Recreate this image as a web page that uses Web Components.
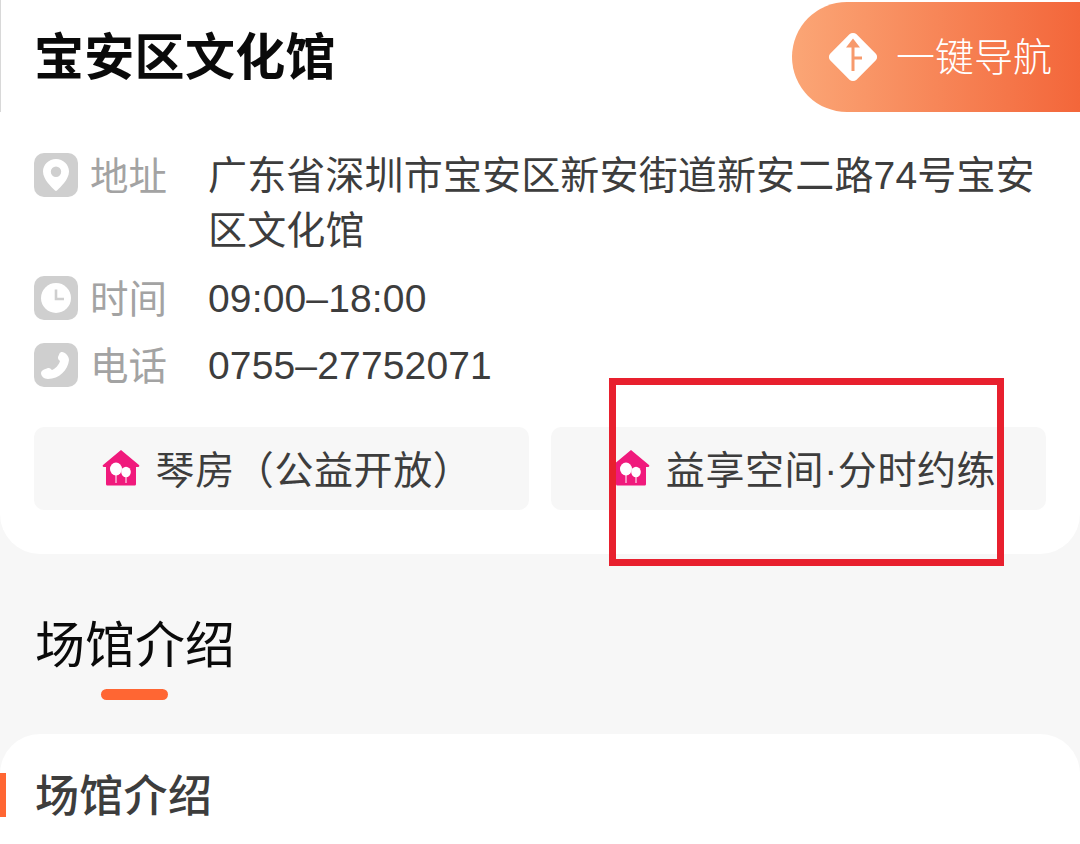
<!DOCTYPE html>
<html lang="zh-CN">
<head>
<meta charset="utf-8">
<title>宝安区文化馆</title>
<style>
  html, body { margin: 0; height: 100%; overflow: hidden; background: #f7f7f7; }
  body { font-family: "Noto Sans CJK SC", "Noto Sans", sans-serif; position: relative; }
</style>
</head>
<body>
<venue-card>
  <venue-header slot="head" name="宝安区文化馆"></venue-header>
  <info-row icon="pin" label="地址">广东省深圳市宝安区新安街道新安二路74号宝安区文化馆</info-row>
  <info-row icon="clock" label="时间">09:00–18:00</info-row>
  <info-row icon="phone" label="电话">0755–27752071</info-row>
  <chip-row slot="chips">
    <facility-chip>琴房（公益开放）</facility-chip>
    <facility-chip>益享空间·分时约练</facility-chip>
  </chip-row>
</venue-card>
<section-title>场馆介绍</section-title>
<intro-card>场馆介绍</intro-card>
<mark-box></mark-box>

<script>
  const ICONS = {
    pin: '<path fill="#fff" fill-rule="evenodd" d="M22 6c-7.200 0-13 5.600-13 12.600 0 8 8.600 15.600 12 19 .6.500 1.400.500 2 0 3.400-3.400 12-11 12-19C35 11.600 29.200 6 22 6zm0 7.600a5.200 5.200 0 1 1 0 10.400 5.200 5.200 0 0 1 0-10.400z"/>',
    clock: '<circle cx="22" cy="22" r="15" fill="#fff"/><path d="M22 13.500V23h8" fill="none" stroke="#cfcfcf" stroke-width="2.600"/>',
    phone: '<path fill="#fff" d="M28 9C31 9 35 13 35 17C34 27 25 36 14 36C10 36 7 33 7 30C7 28 9 27 10 26.500L14 25C16 24.500 17 26 18 27C21 26 25 22 26 18C25 17 23.600 16 24 14L25.500 10.500C26 9.500 27 9 28 9z"/>'
  };
  const LATIN_CJK = '"Liberation Sans", "Noto Sans CJK SC", sans-serif';

  class VenueCard extends HTMLElement {
    constructor() {
      super();
      this.attachShadow({ mode: 'open' }).innerHTML = `
        <style>
          :host { display: block; background: #fff; height: 554px; border-radius: 0 0 40px 40px; overflow: hidden; }
          .rows { display: flex; flex-direction: column; padding: 34px 34px 0 34px; }
        </style>
        <slot name="head"></slot>
        <div class="rows"><slot></slot></div>
        <slot name="chips"></slot>`;
    }
  }

  class VenueHeader extends HTMLElement {
    constructor() {
      super();
      this.attachShadow({ mode: 'open' }).innerHTML = `
        <style>
          :host { display: flex; justify-content: space-between; height: 112px; padding-top: 2px; box-sizing: border-box;
                  border-left: 1px solid #d8d8d8; }
          h1 { margin: 0; padding-left: 33px; font-size: 50px; letter-spacing: .3px; font-weight: 700; line-height: 102px; color: #0a0a0a; }
          .nav { display: flex; align-items: center; gap: 15px; width: 288px; box-sizing: border-box; padding: 0 0 0 33px;
                 border-radius: 55px 0 0 55px; color: #fff; font-size: 39px; font-weight: 300;
                 background: linear-gradient(90deg, #fba676, #f3663a); }
          .nav span { padding-bottom: 6px; }
          svg { width: 56px; height: 56px; flex: none; }
        </style>
        <h1></h1>
        <div class="nav">
          <svg viewBox="0 0 56 56">
            <rect x="9.500" y="9.500" width="37" height="37" rx="5" fill="#fff" transform="rotate(45 28 28)"/>
            <path fill="#f79a6c" d="M28 9.500l7 9h-5.500V42h-3V18.500H21zM29 27.500h8v3h-8z"/>
          </svg>
          <span>一键导航</span>
        </div>`;
      this.shadowRoot.querySelector('h1').textContent = this.getAttribute('name');
    }
  }

  class InfoRow extends HTMLElement {
    constructor() {
      super();
      const icon = ICONS[this.getAttribute('icon')];
      this.attachShadow({ mode: 'open' }).innerHTML = `
        <style>
          :host { display: grid; grid-template-columns: 44px 116px 1fr; padding-bottom: 12.500px; line-height: 55px; }
          .ico { width: 44px; height: 44px; margin-top: 7px; border-radius: 10px; background: #cfcfcf; }
          svg { display: block; width: 44px; height: 44px; }
          .lbl { padding-left: 12px; font-size: 38.500px; color: #a3a3a3; white-space: nowrap; }
          .val { margin: 2px 0 -2px; padding-left: 14px; color: #3d3d3d; font: 39px/55px ${LATIN_CJK}; letter-spacing: .15px; }
        </style>
        <div class="ico"><svg viewBox="0 0 44 44">${icon}</svg></div>
        <div class="lbl"></div>
        <div class="val"><slot></slot></div>`;
      this.shadowRoot.querySelector('.lbl').textContent = this.getAttribute('label');
    }
  }

  class ChipRow extends HTMLElement {
    constructor() {
      super();
      this.attachShadow({ mode: 'open' }).innerHTML = `
        <style>
          :host { display: grid; grid-template-columns: 495px 495px; gap: 22px; padding: 0 34px; margin-top: 23px; }
        </style>
        <slot></slot>`;
    }
  }

  class FacilityChip extends HTMLElement {
    constructor() {
      super();
      this.attachShadow({ mode: 'open' }).innerHTML = `
        <style>
          :host { display: flex; align-items: center; justify-content: center; gap: 16px; height: 83px;
                  box-sizing: border-box; padding: 0 0 0 11px;
                  border-radius: 10px; background: #f7f7f7; color: #3d3d3d; font: 39px ${LATIN_CJK}; letter-spacing: .6px; }
          span { padding-bottom: 2px; white-space: nowrap; }
          svg { width: 38px; height: 38px; flex: none; }
        </style>
        <svg viewBox="0 0 38 38">
          <path fill="#f01a7c" d="M19 1 37 16c.7.7.2 2-.8 2H34V35c0 1-.8 1.500-1.500 1.500h-27C4.800 36.500 4 36 4 35V18H1.800c-1 0-1.500-1.300-.8-2z"/>
          <g fill="#fff"><ellipse cx="14" cy="20" rx="6" ry="6.500"/><ellipse cx="24" cy="23" rx="4.800" ry="5.200"/></g>
          <path d="M14 26v8M24 28v6" stroke="#fff" stroke-width="1"/>
        </svg>
        <span><slot></slot></span>`;
    }
  }

  class SectionTitle extends HTMLElement {
    constructor() {
      super();
      this.attachShadow({ mode: 'open' }).innerHTML = `
        <style>
          :host { display: block; box-sizing: border-box; height: 180px; margin-left: 35px; padding-top: 57px; color: #0a0a0a; font-size: 50px; line-height: 66px; font-weight: 400; white-space: nowrap; }
          .t { display: block; margin-top: -3px; }
          i { display: block; width: 67px; height: 11px; margin: 15px 0 0 66px; border-radius: 6px; background: #ff6633; }
        </style>
        <span class="t"><slot></slot></span><i></i>`;
    }
  }

  class IntroCard extends HTMLElement {
    constructor() {
      super();
      this.attachShadow({ mode: 'open' }).innerHTML = `
        <style>
          :host { display: block; height: 110px; padding-top: 39px; box-sizing: border-box; background: #fff; border-radius: 40px 40px 0 0; }
          h2 { margin: 0; height: 44px; padding-left: 29px; border-left: 6px solid #ff6633; color: #3d3d3d;
               font-size: 44px; letter-spacing: .3px; font-weight: 500; line-height: 40px; }
        </style>
        <h2><slot></slot></h2>`;
    }
  }

  // red outline laid over the second chip
  class MarkBox extends HTMLElement {
    constructor() {
      super();
      this.attachShadow({ mode: 'open' }).innerHTML = `
        <style>
          :host { position: absolute; left: 609px; top: 378px; width: 395px; height: 188px; box-sizing: border-box;
                  border: 7px solid #e8202e; }
        </style>`;
    }
  }

  customElements.define('venue-card', VenueCard);
  customElements.define('venue-header', VenueHeader);
  customElements.define('info-row', InfoRow);
  customElements.define('chip-row', ChipRow);
  customElements.define('facility-chip', FacilityChip);
  customElements.define('section-title', SectionTitle);
  customElements.define('intro-card', IntroCard);
  customElements.define('mark-box', MarkBox);
</script>
</body>
</html>
